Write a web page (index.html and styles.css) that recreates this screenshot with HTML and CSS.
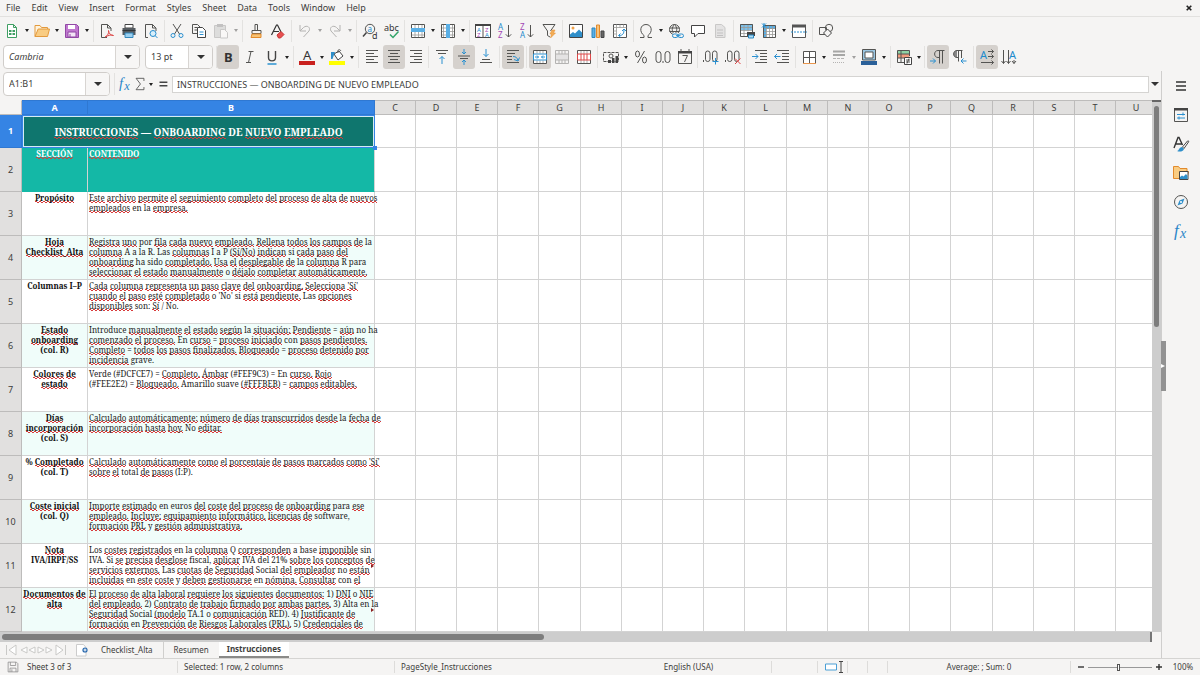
FILE: index.html
```html
<!DOCTYPE html>
<html lang="es">
<head>
<meta charset="utf-8">
<title>Onboarding</title>
<link rel="stylesheet" href="styles.css">
</head>
<body>
<div class="app">
  <nav class="menubar">
    <button>File</button><button>Edit</button><button>View</button><button>Insert</button><button>Format</button><button>Styles</button><button>Sheet</button><button>Data</button><button>Tools</button><button>Window</button><button>Help</button>
    <button class="close" aria-label="Close"><svg viewBox="0 0 6 6" width="6" height="6"><path d="M.7.7l4.6 4.6M5.3.7L.7 5.3" stroke="#222" stroke-width="1.6"/></svg></button>
  </nav>

  <div class="toolbar standard">
    <div class="group">
      <button class="tool" aria-label="New"><svg viewBox="0 0 16 16"><path class="gn" d="M3.5 1.5h6l3 3v10h-9zM9.5 1.5v3h3"/><path d="M5 7h6v5H5z" fill="#3f9f63"/><path d="M5 9.5h6M8 7v5" stroke="#fff"/></svg></button><button class="arrow" aria-label="New options"></button>
      <button class="tool" aria-label="Open"><svg viewBox="0 0 16 16"><path d="M1 13.5v-11h5l1.500 2h6v2" fill="#fff3dc" stroke="#e39a3d"/><path d="M1 13.500L4.200 6H15.500l-2 7.500z" fill="#f9cc82" stroke="#e39a3d"/></svg></button><button class="arrow" aria-label="Open options"></button>
      <button class="tool" aria-label="Save"><svg viewBox="0 0 16 16"><path d="M1.500 1.500h11l2 2v11h-13z" fill="#c078cf" stroke="#9148a5"/><path d="M4 2h7v4H4z" fill="#fff"/><path d="M4 9h8v5H4z" fill="#f4e6f7" stroke="#9148a5"/><path d="M6 11v3" stroke="#9148a5"/></svg></button><button class="arrow" aria-label="Save options"></button>
    </div><i class="sep"></i>
    <div class="group">
      <button class="tool" aria-label="Export as PDF"><svg viewBox="0 0 16 16"><path class="dk" d="M8 14.500H2.500v-13h6l3.500 3.500v3M8.500 1.500V5H12"/><path class="rd" d="M6 14c3-1.500 4-4 3.500-6.500C10 11 12 12.500 14.500 12.500c-2-1-5-.5-8 1.500"/></svg></button>
      <button class="tool" aria-label="Print"><svg viewBox="0 0 16 16"><path d="M4 1.500h8V5H4z" fill="#fff" stroke="#444"/><path d="M1.500 5h13v7h-13z" fill="#555b60"/><path d="M1.500 7.500h13" stroke="#303538"/><path d="M4 10h8v4.500H4z" fill="#9bd0f0" stroke="#3388bd"/></svg></button>
      <button class="tool" aria-label="Print preview"><svg viewBox="0 0 16 16"><path class="dk" d="M5 14.500H2.500v-13h7L13 5v3M9.500 1.500V5H13"/><circle cx="10" cy="10.500" r="3" fill="#d8effb" stroke="#268bcb"/><path class="bl" d="M12.200 12.700L14.500 15"/></svg></button>
    </div><i class="sep"></i>
    <div class="group">
      <button class="tool" aria-label="Cut"><svg viewBox="0 0 16 16"><path class="dk" d="M4 1l6.500 10M12 1L5.500 11"/><circle class="bl" cx="4" cy="12.500" r="2"/><circle class="bl" cx="12" cy="12.500" r="2"/></svg></button>
      <button class="tool" aria-label="Copy"><svg viewBox="0 0 16 16"><path class="dk" d="M6 10.500H1.500v-9h5L9 4M3.500 4.500H6M3.500 7H6"/><path d="M6.500 4.500h5L14.500 7.500v7h-8z" fill="#fff" stroke="#444"/><path class="bl" d="M8.500 9h4M8.500 11.500h4"/></svg></button>
      <button class="tool off" aria-label="Paste"><svg viewBox="0 0 16 16"><path d="M1.500 2.500h11v12h-11z" fill="#bbb" stroke="#888"/><path d="M4 1h6v3H4z" fill="#777"/><path d="M7.500 6.500h4l3 3v5.500h-7z" fill="#fff" stroke="#888"/></svg></button><button class="arrow off" aria-label="Paste options"></button>
    </div><i class="sep"></i>
    <div class="group">
      <button class="tool" aria-label="Clone formatting"><svg viewBox="0 0 16 16"><path class="dk" d="M7 7V1.500h2.500V7M4 7.500h9v3H4z"/><path d="M4 11h9v3.500H3z" fill="#f7c274" stroke="#e28a2c"/></svg></button>
      <button class="tool" aria-label="Clear formatting"><svg viewBox="0 0 16 16"><path d="M1.500 12L6.500 2h1l3.500 7M3.500 8.500H9" fill="none" stroke="#333" stroke-width="1.200"/><path d="M7 12l4-3.500 3 3L10.500 15H8.500z" fill="#e75050" stroke="#c73232"/></svg></button>
    </div><i class="sep"></i>
    <div class="group">
      <button class="tool off" aria-label="Undo"><svg viewBox="0 0 16 16"><path class="dk" d="M3 2v6h6M3 8l3.500-3.500C10 1.500 14 4.500 12 8L6.500 14"/></svg></button><button class="arrow off" aria-label="Undo steps"></button>
      <button class="tool off" aria-label="Redo"><svg viewBox="0 0 16 16"><path class="dk" d="M13 2v6H7M13 8L9.500 4.500C6 1.500 2 4.500 4 8l5.500 6"/></svg></button><button class="arrow off" aria-label="Redo steps"></button>
    </div><i class="sep"></i>
    <div class="group">
      <button class="tool" aria-label="Find and replace"><svg viewBox="0 0 16 16"><circle cx="8" cy="6" r="4.700" class="dk"/><path d="M4.500 9.500L1 13.500" stroke="#444" stroke-width="1.500"/><text x="5.500" y="8.500" font-size="8" fill="#1e8bcd">a</text><text x="10" y="15.500" font-size="9" fill="#333">d</text></svg></button>
      <button class="tool" aria-label="Spelling"><svg viewBox="0 0 16 16"><text x="0" y="7.500" font-size="9" fill="#333">abc</text><path d="M6 11.500l3 3 5.500-6" fill="none" stroke="#33a56a" stroke-width="1.500"/></svg></button>
    </div><i class="sep"></i>
    <div class="group">
      <button class="tool" aria-label="Row"><svg viewBox="0 0 16 16"><path d="M1.500 1.500h13v13h-13z" fill="#fff"/><path class="thin" d="M1.500 12h13M5 9v5.500M8.500 9v5.500M12 9v5.500M5 1.500V5M8.500 1.500V5M12 1.500V5"/><path class="dk" d="M1.500 1.500h13v13h-13z"/><path d="M1 5h14v4H1z" fill="#5aafe5"/></svg></button><button class="arrow" aria-label="Row options"></button>
      <button class="tool" aria-label="Column"><svg viewBox="0 0 16 16"><path d="M1.500 1.500h13v13h-13z" fill="#fff"/><path class="thin" d="M1.500 5H6M1.500 8.500H6M1.500 12H6M10 5h4.500M10 8.500h4.500M10 12h4.500M3.500 1.500v13M12.500 1.500v13"/><path class="dk" d="M1.500 1.500h13v13h-13z"/><path d="M6 1h4v14H6z" fill="#5aafe5"/></svg></button><button class="arrow" aria-label="Column options"></button>
    </div><i class="sep"></i>
    <div class="group">
      <button class="tool" aria-label="Sort"><svg viewBox="0 0 16 16"><path d="M.5 1.500h15v13H.5z" fill="#fff" stroke="#444"/><path d="M0 1h16v2H0z" fill="#444"/><path class="dk" d="M8 3v11.500"/><g font-size="6"><text x="2" y="8.500" fill="#1e8bcd">A</text><text x="2" y="14" fill="#a347b5">Z</text><text x="10" y="8.500" fill="#a347b5">Z</text><text x="10" y="14" fill="#1e8bcd">A</text></g></svg></button>
      <button class="tool" aria-label="Sort ascending"><svg viewBox="0 0 16 16"><g font-size="8"><text x="1" y="7" fill="#1e8bcd">A</text><text x="1" y="15" fill="#a347b5">Z</text></g><path class="dk" d="M11.500 2v12M8.800 11.300l2.700 2.700 2.700-2.700"/></svg></button>
      <button class="tool" aria-label="Sort descending"><svg viewBox="0 0 16 16"><g font-size="8"><text x="1" y="7" fill="#a347b5">Z</text><text x="1" y="15" fill="#1e8bcd">A</text></g><path class="dk" d="M11.500 2v12M8.800 11.300l2.700 2.700 2.700-2.700"/></svg></button>
      <button class="tool" aria-label="AutoFilter"><svg viewBox="0 0 16 16"><path class="dk" d="M2 1.500h12L9.500 8M2 1.500L6.500 8v4.500L9 14"/><path d="M11 7h3l-1.500 3h2L9.500 15l1-4H9z" fill="#f4ad55" stroke="#e28a2c" stroke-width=".5"/></svg></button>
    </div><i class="sep"></i>
    <div class="group">
      <button class="tool" aria-label="Image"><svg viewBox="0 0 16 16"><path d="M1.500 1.500h13v13h-13z" fill="#fff" stroke="#444"/><circle cx="5" cy="5" r="1.500" fill="#f0a24a"/><path d="M2 14v-2.500l3-2.500 2 1.500L11 6.500l3 3V14z" fill="#2f8fca"/></svg></button>
      <button class="tool" aria-label="Chart"><svg viewBox="0 0 16 16"><path d="M2 5h3v9.500H2z" fill="#5aafe5" stroke="#2a86bf"/><path d="M6.500 2h3v12.500h-3z" fill="#f8c27a" stroke="#e28a2c"/><path d="M11 8h3v6.500h-3z" fill="#666" stroke="#444"/></svg></button>
      <button class="tool" aria-label="Pivot table"><svg viewBox="0 0 16 16"><path d="M1.500 1.500h13v13h-13z" fill="#fff" stroke="#555"/><path class="thin" d="M1.500 4.500h13M4.500 1.500v13M8 1.500v3M11.500 1.500v3M1.500 8h3M1.500 11h3"/><path class="bl" d="M7 12.500c4 0 5-2 5-6M10 8l2-2 2 2M8.500 10.500l-2 2 2 1.500"/></svg></button>
    </div><i class="sep"></i>
    <div class="group">
      <button class="tool" aria-label="Special character"><svg viewBox="0 0 16 16"><path class="dk" d="M2 14.500h4v-2C1 9 2 1.500 8 1.500s7 7.500 2 11v2h4"/></svg></button><button class="arrow" aria-label="Recent characters"></button>
      <button class="tool" aria-label="Hyperlink"><svg viewBox="0 0 16 16"><circle class="dk" cx="6.500" cy="6.500" r="5"/><path class="dk" d="M1.500 5h10M1.500 8.500h10M6.500 1.500c-3 3-3 7 0 10M6.500 1.500c3 3 3 7 0 10"/><path d="M5 10h11v6H5z" fill="#f5f4f3"/><rect class="bl" x="4.500" y="11" width="5.500" height="3.500" rx="1.700"/><rect class="bl" x="10" y="11" width="5.500" height="3.500" rx="1.700"/><path class="bl" d="M8 12.700h4.500"/></svg></button>
      <button class="tool" aria-label="Comment"><svg viewBox="0 0 16 16"><path d="M1.500 2.500h13v8H8l-3.500 3.500v-3.500h-3z" fill="#fff" stroke="#444"/></svg></button>
      <button class="tool off" aria-label="Headers and footers"><svg viewBox="0 0 16 16"><path d="M3.500 1.500h6l3.500 3v10H3.500z" fill="#ccc" stroke="#888"/><path d="M5 7h6M5 10h6M5 12.500h6" stroke="#777"/></svg></button>
    </div><i class="sep"></i>
    <div class="group">
      <button class="tool" aria-label="Print area"><svg viewBox="0 0 16 16"><path d="M1.500 1.500h12v12h-12z" fill="#fff"/><path d="M1 1h13v6H1z" fill="#7cc0ea"/><path class="thin" d="M1.500 4.500h12M1.500 7.500h12M1.500 10.500h7M5 1.500v12M9 1.500v7"/><path class="dk" d="M1.500 1.500h12v12h-12z"/><path d="M8 9h8v4H8z" fill="#444"/><path d="M9.500 12h5v3h-5z" fill="#aedcf5" stroke="#2a86bf"/></svg></button>
      <button class="tool" aria-label="Freeze rows and columns"><svg viewBox="0 0 16 16"><path d="M2.500 2.500h12v12h-12z" fill="#fff"/><path d="M2 3h13v3H5v9H2z" fill="#5aafe5"/><path class="thin" d="M2.500 5.500h12M2.500 8.500h12M2.500 11.500h12M5.500 2.500v12M8.500 2.500v12M11.500 2.500v12"/><path class="dk" d="M2.500 2.500h12v12h-12z"/><path class="bl" d="M1 .5l4 4M5 .5l-4 4M3 0v5"/></svg></button><button class="arrow" aria-label="Freeze options"></button>
      <button class="tool" aria-label="Split window"><svg viewBox="0 0 16 16"><path d="M1.500 2.500h13v12h-13z" fill="#fff" stroke="#555"/><path d="M1 1.500h14v3H1z" fill="#555"/><path class="bl" d="M0 9h16" stroke-dasharray="2 1"/></svg></button>
    </div><i class="sep"></i>
    <div class="group">
      <button class="tool" aria-label="Draw functions"><svg viewBox="0 0 16 16"><path class="dk" d="M1.500 4.500h7v7h-7z"/><circle class="dk" cx="11" cy="5" r="3.700"/><path d="M9.500 6l4 4-4 4-4-4z" fill="#f5f4f3" stroke="#444"/></svg></button>
    </div>
  </div>

  <div class="formatting">
    <div class="combo font"><input aria-label="Font name" value="Cambria"><button aria-label="Font list"></button></div>
    <div class="combo size"><input aria-label="Font size" value="13 pt"><button aria-label="Size list"></button></div>
    <i class="sep"></i>
    <div class="toolbar format">
      <div class="group">
        <button class="tool on" aria-label="Bold"><svg viewBox="0 0 16 16"><text x="4" y="13" font-size="13" font-weight="bold" fill="#333">B</text></svg></button>
        <button class="tool" aria-label="Italic"><svg viewBox="0 0 16 16"><path class="dk" d="M6.500 2.500h5M4 13.500h5M9 2.500L6.500 13.500"/></svg></button>
        <button class="tool" aria-label="Underline"><svg viewBox="0 0 16 16"><path d="M4.500 2v6.500c0 4.500 7 4.500 7 0V2" fill="none" stroke="#444" stroke-width="1.400"/><path d="M3.500 15h9" stroke="#1e8bcd" stroke-width="1.400"/></svg></button><button class="arrow" aria-label="Underline options"></button>
      </div><i class="sep"></i>
      <div class="group">
        <button class="tool" aria-label="Font color"><svg viewBox="0 0 16 16"><text x="4" y="10.500" font-size="13" fill="#333">A</text><path d="M0 12h16v4H0z" fill="#c9211e"/></svg></button><button class="arrow" aria-label="Font colors"></button>
        <button class="tool" aria-label="Highlighting"><svg viewBox="0 0 16 16"><path d="M5 5l5-3 4 5-5 4z" fill="#fff" stroke="#444"/><path class="dk" d="M9 4c-1-4 2-4 3-2"/><path d="M2 3h4L3.500 10H2z" fill="#2f8fca"/><path d="M0 12h16v4H0z" fill="#ff0"/></svg></button><button class="arrow" aria-label="Highlight colors"></button>
      </div><i class="sep"></i>
      <div class="group">
        <button class="tool" aria-label="Align left"><svg viewBox="0 0 16 16"><path class="dk" d="M2 1.500h12M2 4.500h8M2 7.500h12M2 10.500h8M2 13.500h12"/></svg></button>
        <button class="tool on" aria-label="Align center"><svg viewBox="0 0 16 16"><path class="dk" d="M2 1.500h12M4 4.500h8M2 7.500h12M4 10.500h8M2 13.500h12"/></svg></button>
        <button class="tool" aria-label="Align right"><svg viewBox="0 0 16 16"><path class="dk" d="M2 1.500h12M6 4.500h8M2 7.500h12M6 10.500h8M2 13.500h12"/></svg></button>
      </div><i class="sep"></i>
      <div class="group">
        <button class="tool" aria-label="Align top"><svg viewBox="0 0 16 16"><path class="dk" d="M2 1.500h12M4 4.500h8"/><path class="bl" d="M8 15V7.500M5.500 10L8 7.500l2.500 2.500"/></svg></button>
        <button class="tool on" aria-label="Center vertically"><svg viewBox="0 0 16 16"><path class="dk" d="M2 7h12M4 9.500h8"/><path class="bl" d="M8 0v5M6 3l2 2 2-2M8 16v-5M6 13l2-2 2 2"/></svg></button>
        <button class="tool" aria-label="Align bottom"><svg viewBox="0 0 16 16"><path class="dk" d="M4 10.500h8M2 13.500h12"/><path class="bl" d="M8 0v7.500M5.500 5L8 7.500 10.500 5"/></svg></button>
      </div><i class="sep"></i>
      <div class="group">
        <button class="tool on" aria-label="Wrap text"><svg viewBox="0 0 16 16"><path class="dk" d="M2 1.500h12M2 4.500h8M2 7.500h5M2 10.500h5M2 13.500h12"/><path class="bl" d="M8 7.500c3 0 4 1 5 4M14.500 8.500L13 12l-4-1.500"/></svg></button>
      </div><i class="sep"></i>
      <div class="group">
        <button class="tool on" aria-label="Merge and center"><svg viewBox="0 0 16 16"><path d="M1.500 1.500h13v13h-13z" fill="#fff"/><path class="thin" d="M5 1.500v3M8 1.500v3M11 1.500v3M5 11.500v3M8 11.500v3M11 11.500v3"/><path class="dk" d="M1.500 1.500h13v13h-13z"/><path class="bl" d="M1.500 5h13v6h-13zM3 8h3.500M9.500 8H13M5 6.500L6.500 8 5 9.500M11 6.500L9.500 8l1.500 1.500"/></svg></button>
        <button class="tool off" aria-label="Merge cells"><svg viewBox="0 0 16 16"><path d="M1.500 5h13v6h-13z" fill="#ccc"/><path class="dk" d="M1.500 1.500h13v13h-13zM1.500 5h13M1.500 11h13M5 1.500V5M8 1.500V5M11 1.500V5M5 11v3.500M8 11v3.500M11 11v3.500"/></svg></button>
        <button class="tool" aria-label="Unmerge cells"><svg viewBox="0 0 16 16"><path d="M1.500 1.500h13v13h-13z" fill="#fff"/><path class="thin" d="M5 1.500V5M8 1.500V5M11 1.500V5M5 11v3.500M8 11v3.500M11 11v3.500"/><path class="dk" d="M1.500 1.500h13v13h-13z"/><path class="rd" d="M1.500 5h13v6h-13zM5 5v6M8 5v6M11 5v6"/></svg></button>
      </div><i class="sep"></i>
      <div class="group">
        <button class="tool" aria-label="Currency"><svg viewBox="0 0 16 16"><path class="dk" d="M.5 3.500h15v9H.5z" stroke-dasharray="3 1"/><circle cx="8" cy="7" r="2" class="dk"/><path d="M9 9h2.500v5H9zM12.500 7H15v7h-2.500zM5 11h3v3H5z" fill="#444"/></svg></button><button class="arrow" aria-label="Currency options"></button>
        <button class="tool" aria-label="Percent"><svg viewBox="0 0 16 16"><ellipse class="dk" cx="4.500" cy="5" rx="2" ry="3"/><ellipse class="dk" cx="11.500" cy="11" rx="2" ry="3"/><path class="dk" d="M11.500 2l-7 12"/></svg></button>
        <button class="tool" aria-label="Number"><svg viewBox="0 0 16 16"><rect class="dk" x="1" y="2.500" width="5" height="11" rx="2.500"/><rect class="dk" x="10" y="2.500" width="5" height="11" rx="2.500"/><path class="dk" d="M8 12v2"/></svg></button>
        <button class="tool" aria-label="Date"><svg viewBox="0 0 16 16"><path class="dk" d="M1.500 2.500h13v12h-13z"/><path d="M1 2h14v2.500H1z" fill="#444"/><path class="dk" d="M4 0v3M12 0v3M5.500 6.500h5L7.500 13"/></svg></button>
      </div><i class="sep"></i>
      <div class="group">
        <button class="tool" aria-label="Add decimal place"><svg viewBox="0 0 16 16"><rect class="dk" x="2.500" y="2" width="4.500" height="10.500" rx="2.200"/><rect class="dk" x="9.500" y="2" width="4.500" height="10.500" rx="2.200"/><path class="dk" d="M.5 11v2"/><path class="bl" d="M12.500 9v6.500M9.500 12.500h6"/></svg></button>
        <button class="tool" aria-label="Delete decimal place"><svg viewBox="0 0 16 16"><rect class="dk" x="2.500" y="2" width="4.500" height="10.500" rx="2.200"/><rect class="dk" x="9.500" y="2" width="4.500" height="10.500" rx="2.200"/><path class="dk" d="M.5 11v2"/><path class="rd" d="M10 9.500l5.500 5.500M15.500 9.500L10 15"/></svg></button>
      </div><i class="sep"></i>
      <div class="group">
        <button class="tool" aria-label="Increase indent"><svg viewBox="0 0 16 16"><path class="dk" d="M3 1.500h12M8 4.500h7M8 7.500h7M8 10.500h7M3 13.500h12"/><path class="bl" d="M0 7.500h6M3.500 5L6 7.500 3.500 10"/></svg></button>
        <button class="tool" aria-label="Decrease indent"><svg viewBox="0 0 16 16"><path class="dk" d="M3 1.500h12M8 4.500h7M8 7.500h7M8 10.500h7M3 13.500h12"/><path class="bl" d="M.5 7.500h6M3 5L.5 7.500 3 10"/></svg></button>
      </div><i class="sep"></i>
      <div class="group">
        <button class="tool" aria-label="Borders"><svg viewBox="0 0 16 16"><path d="M2.500 2.500h12v12h-12z" fill="#fff"/><path class="dk" d="M2.500 14V2.500h12V14M8.500 2.500v12M2.500 8.500h12"/><path d="M2 14.500h13" stroke="#e9964c"/></svg></button><button class="arrow" aria-label="Border presets"></button>
        <button class="tool off" aria-label="Border style"><svg viewBox="0 0 16 16"><path d="M2 2.500h12M2 6h12" stroke="#333" stroke-width="2"/><path class="dk" d="M2 9.500h12" stroke-dasharray="3 1"/><path class="dk" d="M2 13.500h12" stroke-dasharray="1 1"/></svg></button><button class="arrow off" aria-label="Border styles"></button>
        <button class="tool" aria-label="Border color"><svg viewBox="0 0 16 16"><path d="M2.500 1.500h11v9h-11z" fill="#fff"/><path d="M2 1h12v10H2zM4 3v6h8V3z" fill="#9ac6e2" fill-rule="evenodd"/><path class="dk" d="M1.500.5h13v10.500h-13zM4 3h8v6H4z"/><path d="M0 12h16v4H0z" fill="#2a6099"/></svg></button><button class="arrow" aria-label="Border colors"></button>
      </div><i class="sep"></i>
      <div class="group">
        <button class="tool" aria-label="Conditional formatting"><svg viewBox="0 0 16 16"><path d="M1.500 1.500h12V5h-12z" fill="#8fd3a5"/><path d="M1.500 5h12v4h-12z" fill="#f19b7d"/><path class="dk" d="M8 13.500H1.500v-12h12V7M1.500 5h12M1.500 9H8M5 1.500v12"/><path d="M8.500 8.500h7v7h-7z" fill="#fff" stroke="#444"/><path class="dk" d="M10 11h4M10 13h4M13 9.500l-2 5"/></svg></button><button class="arrow" aria-label="Conditional options"></button>
      </div><i class="sep"></i>
      <div class="group">
        <button class="tool on" aria-label="Left to right"><svg viewBox="0 0 16 16"><path class="dk" d="M14.500 1.500H8c-4.500 0-4.500 7 0 7h1M9.500 1.500v13M12.500 1.500v13"/><path class="bl" d="M0 12h5.500M3 9.500L5.500 12 3 14.500"/></svg></button>
        <button class="tool" aria-label="Right to left"><svg viewBox="0 0 16 16"><path d="M5 1.500c-4.500 0-4.500 7 0 7z" fill="#888"/><path class="dk" d="M10.500 1.500H5c-4.500 0-4.500 7 0 7h1M6.500 1.500v11M9.500 1.500V9"/><path class="bl" d="M14.500 12H9M11.500 9.500L9 12l2.500 2.500"/></svg></button>
      </div><i class="sep"></i>
      <div class="group">
        <button class="tool on" aria-label="Horizontal text direction"><svg viewBox="0 0 16 16"><text x="1" y="9.500" font-size="11" fill="#1e8bcd">A</text><path class="dk" d="M9 2.500h5.500M12.500.5l2 2-2 2M9 7.500h5.500M12.500 5.500l2 2-2 2M2 13.500h12.500M12.500 11.500l2 2-2 2"/></svg></button>
        <button class="tool" aria-label="Vertical text direction"><svg viewBox="0 0 16 16"><text x="8" y="9.500" font-size="11" fill="#1e8bcd">A</text><path class="dk" d="M2.500 1v13.500M.5 12l2 2.500 2-2.500M7.500 1v13.500M5.500 12l2 2.500 2-2.500M13 11v3.500M11 12l2 2.500 2-2.500"/></svg></button>
      </div>
    </div>
  </div>

  <div class="work">
    <main class="document">
      <div class="formulabar">
        <div class="combo name"><input aria-label="Name box" value="A1:B1"><button aria-label="Named ranges"></button></div>
        <i class="sep"></i>
        <button class="tool small" aria-label="Function wizard"><svg viewBox="0 0 16 16"><text class="fx" x="1" y="13" font-size="17">f</text><text class="fx" x="7" y="15" font-size="14">x</text></svg></button>
        <button class="tool small" aria-label="Select function"><svg viewBox="0 0 16 16"><path class="dk" d="M12.500 4.500v-3h-9l5 6.500-5 6.500h9v-3"/></svg></button><button class="arrow" aria-label="Functions"></button>
        <button class="tool small" aria-label="Formula"><svg viewBox="0 0 16 16"><path d="M4 6h9M4 10h9" stroke="#444" stroke-width="1.500"/></svg></button>
        <input class="formula" aria-label="Input line" value="INSTRUCCIONES — ONBOARDING DE NUEVO EMPLEADO">
        <button class="arrow wide" aria-label="Expand formula bar"></button>
      </div>
      <div class="sheet">
        <div class="cells"><table class="grid" id="grid"></table></div>
        <div class="vscroll"><i></i></div>
      </div>
      <div class="hscroll"><i></i></div>
      <div class="tabs">
        <svg class="tabnav" viewBox="0 0 62 12" width="62" height="12"><path d="M1.500 1v10M11 1L4 6l7 5zM22 3l-6 3 6 3zM30 3l-6 3 6 3zM33 3l6 3-6 3zM41 3l6 3-6 3zM51 1l7 5-7 5zM60.500 1v10" fill="#fff" stroke="#c9c9c7"/></svg>
        <button class="add" aria-label="Add sheet"><svg viewBox="0 0 14 14" width="14" height="14"><path d="M1.500 1.500h7l2.500 3v8.500h-9.500z" fill="#fff" stroke="#ccc"/><circle cx="10" cy="7" r="2.600" fill="#2667ad"/><path d="M8.500 7h3M10 5.500v3" stroke="#fff"/></svg></button>
        <button class="tab">Checklist_Alta</button><button class="tab">Resumen</button><button class="tab active">Instrucciones</button>
      </div>
    </main>
    <aside class="sidebar">
      <button class="handle" aria-label="Collapse sidebar"><svg viewBox="0 0 4 6" width="4" height="6"><path d="M0 1l4 2-4 2z" fill="#fff"/></svg></button>
      <button class="deck" aria-label="Sidebar settings"><svg viewBox="0 0 16 16"><path d="M3 4h10M3 8h10M3 12h10" stroke="#333" stroke-width="1.300"/></svg></button>
      <button class="deck" aria-label="Properties"><svg viewBox="0 0 16 16"><path class="dk" d="M1.500 1.500h13v13h-13z"/><path d="M1 1h14v2.500H1z" fill="#444"/><path class="bl" d="M4 7.500h8M4 11h8M10 5.500v3M6 9.500v3"/></svg></button>
      <button class="deck" aria-label="Styles"><svg viewBox="0 0 16 16"><path d="M1 12L5 1.500h1L9.500 9M2.500 8h6" fill="none" stroke="#333" stroke-width="1.400"/><path d="M9.500 11l5-6c1-.5 1.500 0 1 1l-4.500 6.500z" fill="#fff" stroke="#444"/><path d="M4 15c2 0 2-4 5-4l2 2c-1 3-5 3-7 2z" fill="#2f8fca"/></svg></button>
      <button class="deck" aria-label="Gallery"><svg viewBox="0 0 16 16"><path d="M.5 13.500v-12h5l1.500 2h7v3l1.500 0L14 13.500z" fill="#f9cc82" stroke="#e28a2c"/><path d="M6.500 6.500h8.500v8H6.500z" fill="#fff" stroke="#444"/><path d="M7 14v-2l2-1.500 1.500 1 2.500-2.500 1.500 2v3z" fill="#2f8fca"/></svg></button>
      <button class="deck" aria-label="Navigator"><svg viewBox="0 0 16 16"><circle class="dk" cx="8" cy="8" r="6.500"/><path d="M11.500 4.500L9.500 9.500 4.500 11.500 6.500 6.500z" fill="#2f8fca"/><circle cx="8" cy="8" r="1" fill="#fff"/></svg></button>
      <button class="deck" aria-label="Functions"><svg viewBox="0 0 16 16"><text class="fx" x="1" y="13" font-size="17">f</text><text class="fx" x="7" y="15" font-size="14">x</text></svg></button>
    </aside>
  </div>

  <footer class="status">
    <span class="saved"><svg viewBox="0 0 16 16" width="12" height="12"><path d="M1.500 1.500h11l2 2v11h-13zM4.500 1.500V6h7V1.500M4 14.500V9.500h8v5M6.500 11v3.500" fill="none" stroke="#888"/></svg></span>
    <span>Sheet 3 of 3</span>
    <span class="cut">Selected: 1 row, 2 columns</span>
    <span class="cut">PageStyle_Instrucciones</span>
    <span class="mid">English (USA)</span>
    <span class="cut"></span>
    <span class="cut modes"><svg viewBox="0 0 22 12" width="22" height="12"><path d="M1.500 3h11v6h-11z" fill="#fff" stroke="#4b9fd5"/><path d="M15 .5h4M17 .5v11M15 11.500h4" stroke="#444" fill="none"/></svg></span>
    <span class="cut"></span>
    <span class="cut"></span>
    <span class="cut mid">Average: ; Sum: 0</span>
    <span class="cut zoom"><button aria-label="Zoom out"><svg viewBox="0 0 8 8" width="8" height="8"><path d="M1 4h6" stroke="#333" stroke-width="1.400"/></svg></button><input type="range" aria-label="Zoom" min="0" max="100" value="48"><button aria-label="Zoom in"><svg viewBox="0 0 8 8" width="8" height="8"><path d="M1 4h6M4 1v6" stroke="#333" stroke-width="1.400"/></svg></button></span>
    <span class="mid">100%</span>
  </footer>
</div>
<script src="sheet.js"></script>
</body>
</html>
```

FILE: styles.css
```css
* { box-sizing: border-box; }
body { margin: 0; font: 9px/12px "Noto Sans", sans-serif; color: #3d3d3b; background: #f5f4f3; }
button { border: 0; padding: 0; background: none; font: inherit; color: inherit; }
input { font: inherit; color: inherit; border: 0; padding: 0; min-width: 0; outline: 0; }
svg { display: block; flex: none; overflow: visible; }
.app { display: flex; flex-direction: column; height: 100vh; overflow: hidden; }

.dk { fill: none; stroke: #545452; }
.thin { fill: none; stroke: #9a9a98; stroke-width: .8; }
.bl { fill: none; stroke: #2a90d0; }
.rd { fill: none; stroke: #dd4848; }
.gn { fill: #fff; stroke: #3f9f63; }
.fx { font-family: "Liberation Serif", serif; font-style: italic; fill: #2a85c8; }

.menubar { display: flex; align-items: center; gap: 11px; height: 17px; padding: 0 8px 0 6px; border-bottom: 1px solid #e2e1df; flex: none; }
.menubar .close { margin-left: auto; }

.toolbar { display: flex; align-items: center; justify-content: space-between; flex: none; }
.standard { max-width: 838px; height: 27px; padding: 0 1px; }
.format { flex: 0 1 803px; }
.formatting { display: flex; align-items: center; height: 26px; padding-left: 3px; flex: none; margin-bottom: 1px; }
.group { display: flex; align-items: center; }
.sep { width: 1px; height: 22px; background: #e3e2e0; flex: none; }
.tool { width: 22px; height: 24px; display: flex; align-items: center; justify-content: center; border-radius: 3px; flex: none; }
.tool svg, .deck svg { width: 16px; height: 16px; }
.tool.on { background: #d5d1cd; }
.off { opacity: .4; }
.arrow { width: 8px; height: 24px; display: flex; align-items: center; justify-content: center; flex: none; }
.arrow::before { content: ""; border: 2px solid transparent; border-top: 3px solid #222; border-bottom: 0; }
.arrow.wide { width: 12px; }
.arrow.wide::before, .combo button::before { content: ""; border: 4px solid transparent; border-top: 4px solid #333; border-bottom: 0; }

.combo { display: flex; height: 24px; border: 1px solid #d0cdca; border-radius: 4px; background: #fff; overflow: hidden; flex: none; }
.combo input { flex: 1; padding-left: 5px; background: none; }
.combo button { width: 24px; border-left: 1px solid #d8d5d2; background: #f7f6f5; display: flex; align-items: center; justify-content: center; }
.font { width: 137px; margin-right: 5px; font-style: italic; }
.size { width: 68px; margin-right: 3px; }
.name { width: 107px; margin-right: 4px; }

.work { display: flex; flex: 1; min-height: 0; }
.document { flex: 1; min-width: 0; display: flex; flex-direction: column; border-right: 1px solid #cfcecd; }
.formulabar { display: flex; align-items: center; height: 29px; padding-left: 3px; padding-bottom: 3px; flex: none; }
.formulabar .sep { margin-right: 2px; }
.tool.small { width: 15px; }
.tool.small svg { width: 14px; height: 14px; }
.formula { flex: 1; height: 17px; margin-left: 2px; padding-left: 4px; border: 1px solid #d5d4d2; background: #fff; }

.sheet { display: flex; flex: 1; min-height: 0; }
.cells { flex: 1; min-width: 0; overflow: hidden; background: #fff; }
.grid { width: 100%; table-layout: fixed; border-spacing: 0; }
.grid th, .grid td { padding: 0; border-right: 1px solid #d3d3d3; border-bottom: 1px solid #d3d3d3; }
.grid thead th { height: 15px; line-height: 12px; font-weight: normal; background: #e1e0df; border-color: #bdbcbb; border-top: 1px solid #bdbcbb; }
.grid thead .corner { background: #f5f4f3; border-top-color: #f5f4f3; }
.grid tbody th { font-weight: normal; background: #e1e0df; border-color: #bdbcbb; }
.grid .picked, .grid thead .picked { background: #3584e4; border-color: #2f78d2; color: #fff; font-weight: bold; }
.w-head { width: 22px; }
.w-a { width: 66px; }
.w-b { width: 287px; }
.w-cell { width: 41px; }
.w-cell-plus { width: 42px; }
.r-title { height: 33px; }
.r-body { height: 44px; }
.grid .text { vertical-align: top; font: 8px/10px "Noto Serif", "DejaVu Serif Condensed", "DejaVu Serif", serif; color: #222; white-space: nowrap; position: relative; text-rendering: optimizeSpeed; }
.clip { height: 43px; padding: 1px 0 0 1px; overflow: visible clip; }
.grid .label { text-align: center; font-weight: bold; color: #111; }
.label .clip { padding-left: 0; }
.bad {
  background:
    repeating-linear-gradient(90deg, #d83a3a 0 2px, transparent 2px 4px) left bottom 1px / 100% 1px no-repeat,
    repeating-linear-gradient(90deg, transparent 0 2px, #d83a3a 2px 4px) left bottom / 100% 1px no-repeat;
}
.tint .text { background: #f0fdfa; }
.head .text { background: #14b8a6; color: #fff; font-weight: bold; border-bottom-color: #14b8a6; }
.grid .title { background: #0f766e; color: #fff; text-align: center; vertical-align: middle; font-size: 10px; font-weight: bold; border: 0; outline: 1px solid #3584e4; outline-offset: -1px; box-shadow: inset 0 0 0 2px #d5ecf5; }
.title::after { content: ""; position: absolute; right: -2px; bottom: -2px; width: 4px; height: 4px; background: #3584e4; z-index: 1; }
.more { position: absolute; right: 0; top: 20px; border: 2px solid transparent; border-left: 3px solid #8c1f1f; border-right: 0; }

.vscroll { width: 9px; background: #cdcdcd; padding: 4px 2px 0; flex: none; border-top: 2px solid #666; }
.vscroll i { display: block; height: 42%; border-radius: 3px; background: #7d7d7d; }
.hscroll { height: 10px; background: #cdcdcd; padding: 2px; margin-right: 9px; border-right: 2px solid #777; flex: none; }
.hscroll i { display: block; width: 542px; max-width: 50%; height: 6px; border-radius: 3px; background: #7d7d7d; }
.tabs { display: flex; align-items: center; height: 16px; padding-left: 5px; flex: none; font-size: 8px; }
.add { margin: 0 2px 0 8px; }
.tab { height: 16px; padding: 0 10px; }
.tab + .tab { border-left: 1px solid #d0cfcd; }
.tab.active { background: #fff; font-weight: bold; padding: 0 8px; border: 0; border-bottom: 2px solid #8a8a88; }

.sidebar { width: 38px; display: flex; flex-direction: column; align-items: center; flex: none; position: relative; }
.deck { width: 24px; height: 29px; display: flex; align-items: center; justify-content: center; }
.handle { position: absolute; left: -1px; top: 46%; width: 5px; height: 50px; background: #929292; }

.status { display: grid; grid-template-columns: 20px 153px 217px 212px 1fr 46px 30px 20px 20px 183px 98px 30px; align-items: center; height: 17px; padding-left: 4px; border-top: 1px solid #d5d4d2; flex: none; padding-right: 2px; font-size: 8px; }
.status > span { padding-left: 3px; min-height: 12px; white-space: nowrap; }
.status .cut { border-left: 1px solid #dddcda; padding-left: 6px; }
.status .mid { text-align: center; padding-left: 0; }
.zoom { display: flex; align-items: center; gap: 3px; }
.zoom input { appearance: none; width: 64px; height: 10px; margin: 0; background: linear-gradient(#999, #999) center / 100% 1px no-repeat; }
.zoom input::-webkit-slider-thumb { appearance: none; width: 3px; height: 7px; background: #fff; border: 1px solid #555; }
```

FILE: sheet.js
```js
// Words that start with ~ are known to the spell checker; all others get a wavy line.
const rows = [
  ["SECCIÓN", "CONTENIDO"],
  ["Propósito", "Este archivo permite el seguimiento completo del proceso de alta de nuevos|empleados ~en ~la empresa."],
  ["Hoja|Checklist_Alta", "Registra uno ~por fila cada nuevo empleado. Rellena todos los campos de ~la|columna ~A ~a ~la ~R. ~Las columnas ~I ~a ~P (Sí/No) indican ~si cada paso del|onboarding ~ha ~sido completado. Usa el desplegable de ~la columna ~R ~para|seleccionar el estado manualmente ~o déjalo completar automáticamente."],
  ["~Columnas ~I–P", "Cada columna representa un paso clave del onboarding. Selecciona 'Sí'|cuando el paso esté completado ~o ~'No' ~si está pendiente. ~Las opciones|disponibles ~son: Sí ~/ ~No."],
  ["Estado|onboarding|~(col. ~R)", "~Introduce manualmente el estado según ~la situación: Pendiente ~= aún ~no ~ha|comenzado el proceso. ~En curso ~= proceso iniciado ~con pasos pendientes.|Completo ~= todos los pasos finalizados. Bloqueado ~= proceso detenido por|incidencia ~grave."],
  ["Colores de|estado", "~Verde ~(#DCFCE7) ~= Completo. Ámbar ~(#FEF9C3) ~= ~En curso. Rojo|~(#FEE2E2) ~= Bloqueado. ~Amarillo ~suave (#FFFBEB) ~= campos editables."],
  ["Días|incorporación|~(col. ~S)", "Calculado automáticamente: número de días transcurridos desde ~la fecha de|incorporación hasta hoy. ~No editar."],
  ["~% Completado|~(col. ~T)", "Calculado automáticamente como el porcentaje de pasos marcados como 'Sí'|sobre el ~total de pasos ~(I:P)."],
  ["Coste inicial|~(col. ~Q)", "Importe estimado ~en ~euros del coste del proceso de onboarding ~para ese|empleado. Incluye: equipamiento informático, licencias de ~software,|formación PRL ~y gestión administrativa."],
  ["Nota|~IVA/IRPF/SS", "~Los costes registrados ~en ~la columna ~Q corresponden ~a ~base imponible ~sin|~IVA. ~Si se precisa desglose ~fiscal, aplicar ~IVA ~del ~21% sobre los conceptos de|servicios externos. ~Las cuotas de Seguridad ~Social del empleador ~no están|incluidas ~en este coste ~y deben gestionarse ~en nómina. Consultar ~con el", true],
  ["Documentos de|alta", "El proceso de alta laboral requiere los siguientes documentos: ~1) DNI ~o NIE|del empleado. ~2) Contrato de trabajo firmado por ambas partes. ~3) ~Alta ~en ~la|Seguridad ~Social (modelo ~TA.1 ~o comunicación ~RED). ~4) Justificante de|formación ~en Prevención de Riesgos Laborales (PRL). ~5) Credenciales de", true]
];
const letters = "CDEFGHIJKLMNOPQRSTU".split("");
const spell = text => text.split("|").map(line => line.split(" ").map(word =>
  word[0] === "~" ? word.slice(1) : `<span class="bad">${word}</span>`).join(" ")).join("<br>");
const blanks = letters.map(() => "<td></td>").join("");
const cols = letters.map(l => `<col class="${"GLQ".includes(l) ? "w-cell-plus" : "w-cell"}">`).join("");
const body = rows.map(([label, text, more], i) =>
  `<tr class="r-body ${i === 0 ? "head" : i % 2 === 0 ? "tint" : ""}"><th scope="row">${i + 2}</th>` +
  `<td class="text label"><div class="clip">${spell(label)}</div></td>` +
  `<td class="text"><div class="clip">${spell(text)}</div>${more ? '<i class="more"></i>' : ""}</td>${blanks}</tr>`).join("");
document.getElementById("grid").innerHTML =
  `<colgroup><col class="w-head"><col class="w-a"><col class="w-b">${cols}</colgroup>` +
  `<thead><tr><th class="corner"></th><th class="picked">A</th><th class="picked">B</th>${letters.map(l => `<th>${l}</th>`).join("")}</tr></thead>` +
  `<tbody><tr class="r-title"><th class="picked" scope="row">1</th><td class="text title" colspan="2">${spell("INSTRUCCIONES ~— ONBOARDING ~DE NUEVO EMPLEADO")}</td>${blanks}</tr>${body}</tbody>`;
```
